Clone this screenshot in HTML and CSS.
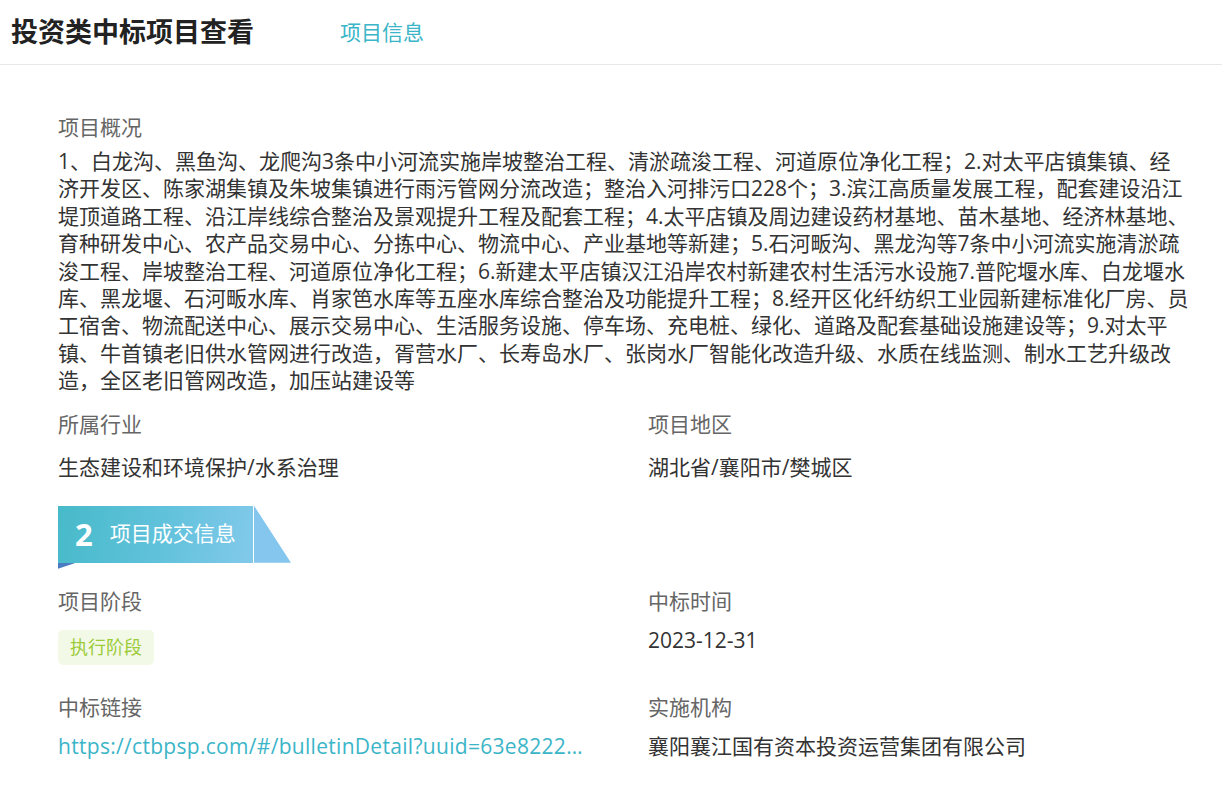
FILE: index.html
```html
<!DOCTYPE html>
<html lang="zh-CN">
  <head>
    <meta charset="UTF-8" />
    <meta name="viewport" content="width=device-width, initial-scale=1.0" />
    <title>投资类中标项目查看</title>
    <link rel="stylesheet" href="styles.css">
  </head>
  <body>
    <header class="header">
      <h1 class="header-title">投资类中标项目查看</h1>
      <nav class="header-tabs">
        <a href="#" class="tab tab-active">项目信息</a>
      </nav>
    </header>

    <main class="content">
      <section class="overview">
        <div class="field-label">项目概况</div>
        <p class="overview-text">1、白龙沟、黑鱼沟、龙爬沟3条中小河流实施岸坡整治工程、清淤疏浚工程、河道原位净化工程；2.对太平店镇集镇、经济开发区、陈家湖集镇及朱坡集镇进行雨污管网分流改造；整治入河排污口228个；3.滨江高质量发展工程，配套建设沿江堤顶道路工程、沿江岸线综合整治及景观提升工程及配套工程；4.太平店镇及周边建设药材基地、苗木基地、经济林基地、育种研发中心、农产品交易中心、分拣中心、物流中心、产业基地等新建；5.石河畈沟、黑龙沟等7条中小河流实施清淤疏浚工程、岸坡整治工程、河道原位净化工程；6.新建太平店镇汉江沿岸农村新建农村生活污水设施7.普陀堰水库、白龙堰水库、黑龙堰、石河畈水库、肖家笆水库等五座水库综合整治及功能提升工程；8.经开区化纤纺织工业园新建标准化厂房、员工宿舍、物流配送中心、展示交易中心、生活服务设施、停车场、充电桩、绿化、道路及配套基础设施建设等；9.对太平镇、牛首镇老旧供水管网进行改造，胥营水厂、长寿岛水厂、张岗水厂智能化改造升级、水质在线监测、制水工艺升级改造，全区老旧管网改造，加压站建设等</p>
      </section>

      <section class="field-grid field-grid-basic">
        <div class="field">
          <div class="field-label">所属行业</div>
          <div class="field-value">生态建设和环境保护/水系治理</div>
        </div>
        <div class="field">
          <div class="field-label">项目地区</div>
          <div class="field-value">湖北省/襄阳市/樊城区</div>
        </div>
      </section>

      <div class="section-banner">
        <div class="banner-main">
          <span class="banner-num">2</span>
          <span class="banner-title">项目成交信息</span>
        </div>
        <div class="banner-tip"></div>
      </div>

      <section class="field-grid field-grid-deal">
        <div class="field">
          <div class="field-label">项目阶段</div>
          <span class="stage-tag">执行阶段</span>
        </div>
        <div class="field">
          <div class="field-label">中标时间</div>
          <div class="field-value">2023-12-31</div>
        </div>
        <div class="field">
          <div class="field-label">中标链接</div>
          <a href="#" class="field-link">https://ctbpsp.com/#/bulletinDetail?uuid=63e8222a8</a>
        </div>
        <div class="field">
          <div class="field-label">实施机构</div>
          <div class="field-value">襄阳襄江国有资本投资运营集团有限公司</div>
        </div>
      </section>
    </main>
  </body>
</html>
```

FILE: styles.css
```css
:root {
  --text-primary: #333333;
  --text-label: #666666;
  --accent: #3bb5c8;
  --border: #e8e8e8;
  --gutter: 58px;
}

* {
  margin: 0;
  padding: 0;
  box-sizing: border-box;
}

body {
  font-family: "Open Sans", "Noto Sans CJK SC", sans-serif;
  font-size: 21px;
  color: var(--text-primary);
  background: #ffffff;
  overflow: hidden;
}

.header {
  display: flex;
  align-items: center;
  height: 65px;
  padding-left: 11px;
  border-bottom: 1px solid var(--border);
}

.header-title {
  font-size: 27px;
  font-weight: 700;
  color: #222222;
  line-height: 1;
  margin-bottom: 2px;
}

.header-tabs {
  margin-left: 86px;
}

.tab {
  color: var(--accent);
  text-decoration: none;
  font-size: 21px;
  line-height: 1;
}

.content {
  padding: 49px 30px 0 var(--gutter);
}

.field-label {
  color: var(--text-label);
  line-height: 27px;
}

.field-value {
  line-height: 27px;
}

.overview-text {
  margin-top: 7px;
  line-height: 27.4px;
  width: 1132px;
}

.field-grid {
  display: grid;
  grid-template-columns: 590px 1fr;
}

.field-grid-basic {
  margin-top: 16px;
}

.field-grid-basic .field-label {
  margin-bottom: 16px;
}

/* banner */
.section-banner {
  display: flex;
  margin-top: 25px;
}

.banner-main {
  position: relative;
  display: flex;
  align-items: center;
  width: 195px;
  height: 57px;
  padding-left: 17px;
  background: linear-gradient(100deg, #47bac9 0%, #62c2dc 55%, #82c9ea 100%);
  color: #ffffff;
}

.banner-main::after {
  content: "";
  position: absolute;
  left: 0;
  top: 57px;
  width: 18px;
  height: 6px;
  background: #4a7cc2;
  clip-path: polygon(0 0, 100% 0, 0 100%);
}

.banner-num {
  font-size: 31px;
  font-weight: 700;
  line-height: 1;
  margin-right: 17px;
}

.banner-title {
  font-size: 21px;
  line-height: 1;
  margin-bottom: 2px;
}

.banner-tip {
  width: 37px;
  height: 57px;
  margin-left: 1px;
  background: #84c6ee;
  clip-path: polygon(0 0, 100% 100%, 0 100%);
}

.field-grid-deal {
  margin-top: 25px;
  row-gap: 29px;
}

.field-grid-deal .field-label {
  margin-bottom: 12px;
}

.stage-tag {
  display: inline-block;
  margin-top: 3px;
  padding: 0 12px;
  height: 35px;
  line-height: 35px;
  font-size: 18px;
  color: #9ccb38;
  background: #f3f9e7;
  border-radius: 5px;
}

.field-link {
  display: block;
  max-width: 530px;
  margin-top: 1px;
  color: var(--accent);
  text-decoration: none;
  line-height: 27px;
  letter-spacing: 0.3px;
  white-space: nowrap;
  overflow: hidden;
  text-overflow: ellipsis;
}
```
